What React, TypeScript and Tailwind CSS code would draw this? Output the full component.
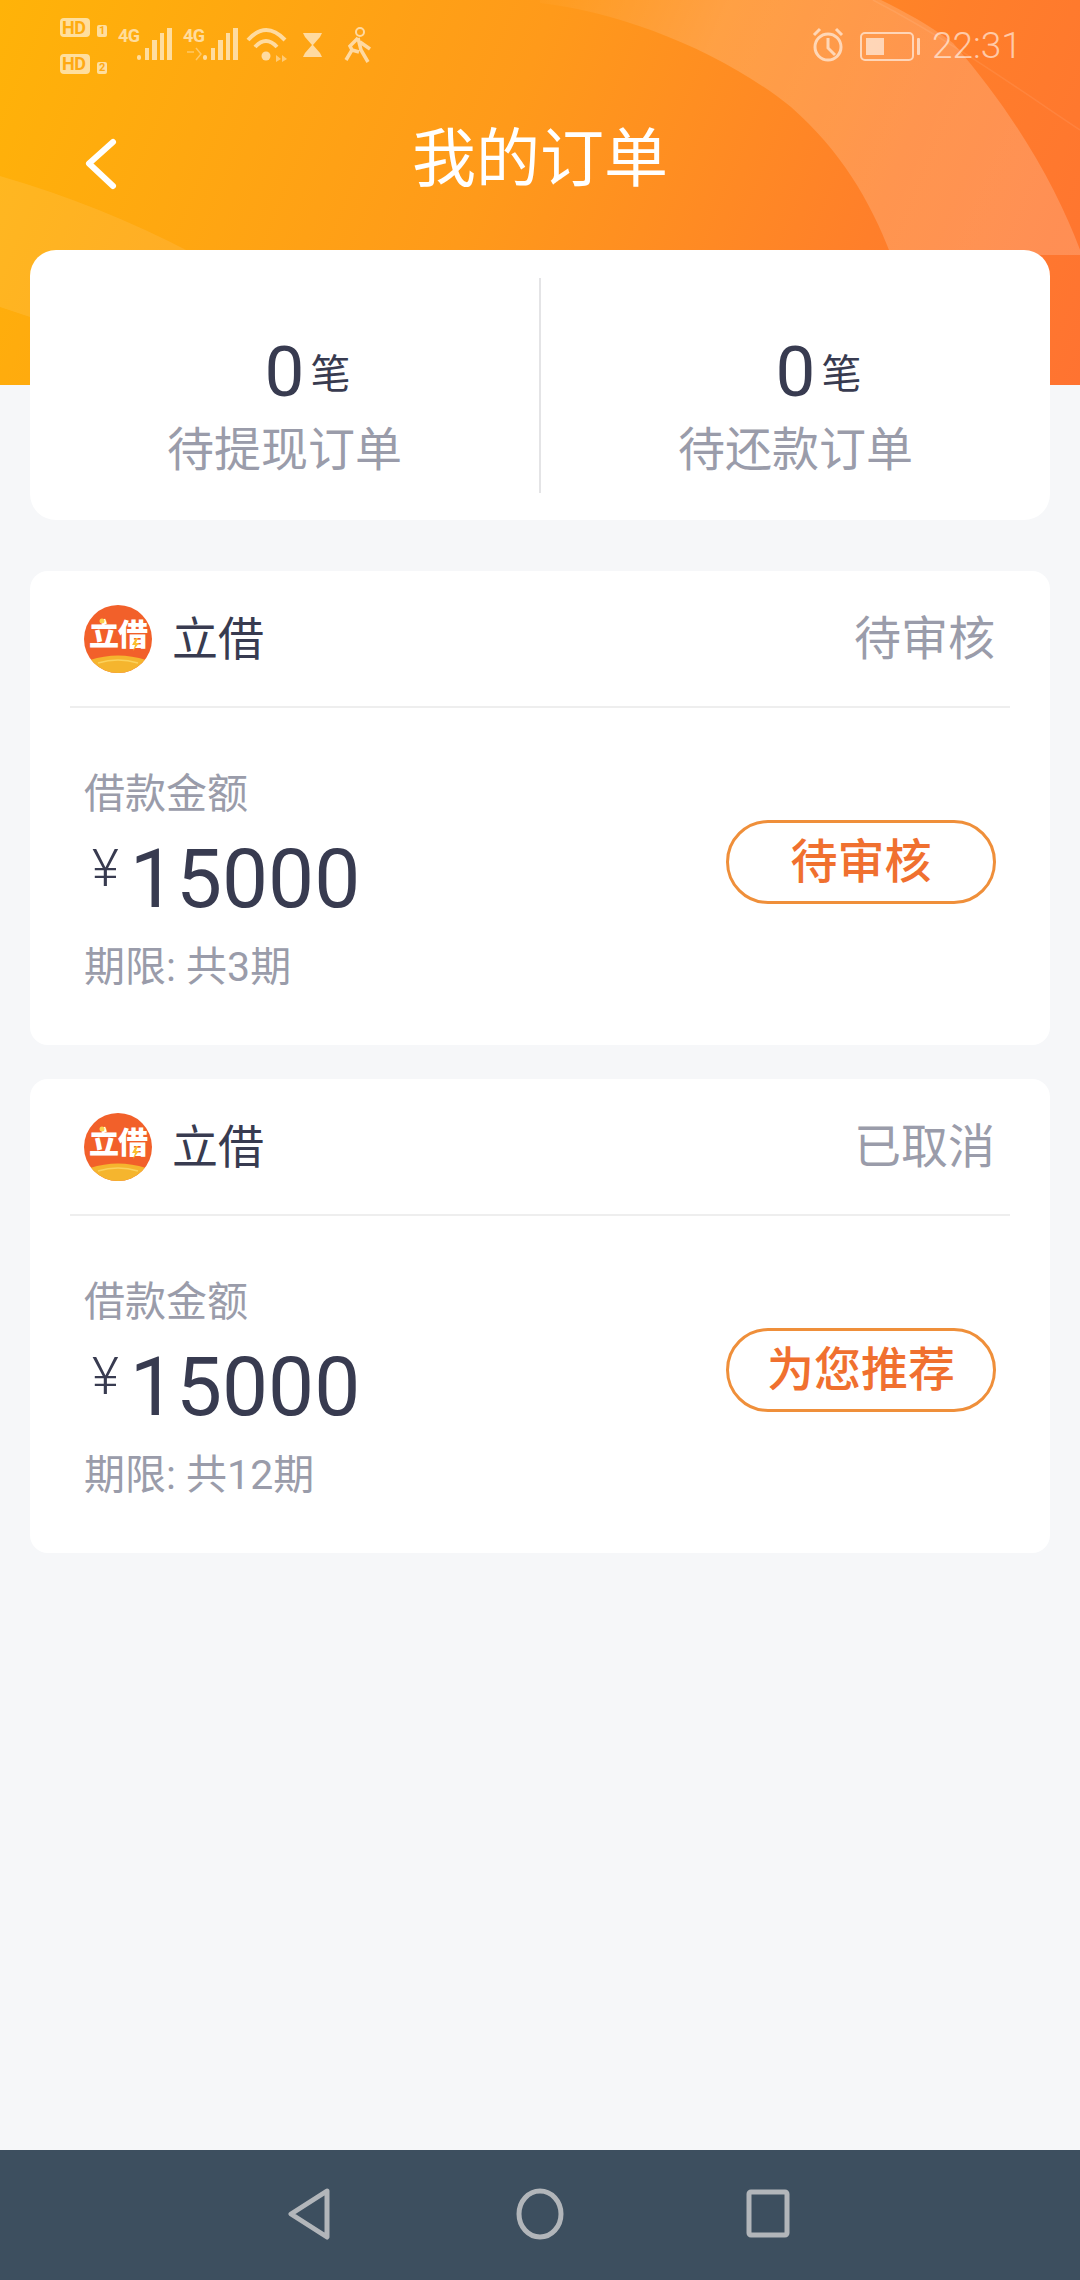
const cjk = "font-['Roboto','Noto_Sans_CJK_SC',sans-serif]";

function Logo() {
  return (
    <div className="relative w-[68px] h-[68px] rounded-full overflow-hidden bg-[#f2602a] flex items-start justify-center">
      <span className="mt-[13px] text-[30px] leading-[34px] font-black text-white tracking-[-1px] whitespace-nowrap">立借</span>
      <svg className="absolute left-0 top-0" width="68" height="68" viewBox="0 0 68 68">
        <path d="M6 55 Q34 46 62 55 L62 68 L6 68 Z" fill="#f5b52e" />
        <path d="M14 58 Q34 52 54 58" stroke="#fbd25c" strokeWidth="1.5" fill="none" />
        <circle cx="18" cy="16" r="2.5" fill="#fcd24f" />
        <path d="M52 33 L48 40 L51 40 L49 46 L55 38 L52 38 L54 33Z" fill="#fbc02d" />
      </svg>
    </div>
  );
}

function OrderCard({ status, action, term }: { status: string; action: string; term: string }) {
  return (
    <div className="bg-white rounded-[18px] h-[474px] mx-[30px] flex flex-col">
      <div className="h-[137px] mx-[40px] pl-[14px] border-b-2 border-[#eeeeee] flex items-center justify-between">
        <div className="flex items-center gap-[20px]">
          <Logo />
          <span className="text-[46px] leading-[60px] text-[#383b50] mt-[1px]">立借</span>
        </div>
        <span className="text-[47px] leading-[60px] text-[#9a9caa] mr-[15px] mt-[1px]">{status}</span>
      </div>
      <div className="flex-1 px-[54px] flex items-start justify-between">
        <div className="pt-[61px] flex flex-col">
          <span className="text-[41px] leading-[50px] text-[#9a9caa]">借款金额</span>
          <div className="flex items-center h-[100px] mt-[10px]">
            <span className="text-[52px] leading-[50px] text-[#383b50] ml-[8px] mt-[-20px] font-light">¥</span>
            <span className="text-[82px] leading-[100px] text-[#383b50] ml-[11px]">15000</span>
          </div>
          <span className="text-[41px] leading-[50px] text-[#9a9caa] mt-[13px]">期限: 共{term}期</span>
        </div>
        <div className="mt-[112px] w-[270px] h-[84px] rounded-full border-[3px] border-[#ef8f3a] flex items-center justify-center text-[47px] font-medium text-[#f0702f]">
          {action}
        </div>
      </div>
    </div>
  );
}

function SignalBars({ x }: { x: number }) {
  return (
    <g fill="#fff">
      <rect x={x} y={55} width="4" height="5" rx="2" />
      <rect x={x + 8} y={48} width="4" height="12" />
      <rect x={x + 15} y={40} width="5" height="20" />
      <rect x={x + 23} y={33} width="4" height="27" />
      <rect x={x + 30} y={28} width="5" height="32" />
    </g>
  );
}

function Stat({ label }: { label: string }) {
  return (
    <div className="flex-1 pt-[82px] flex flex-col items-center">
      <div className="flex items-center h-[80px] ml-[46px]">
        <span className="text-[71px] leading-[80px] text-[#383b50]">0</span>
        <span className="text-[40px] leading-[50px] text-[#383b50] ml-[6px] mt-[6px]">笔</span>
      </div>
      <span className="text-[47px] leading-[60px] text-[#9a9caa] mt-[8px]">{label}</span>
    </div>
  );
}

export default function App() {
  return (
    <div className={`relative w-[1080px] h-[2280px] bg-[#f6f7f9] flex flex-col ${cjk}`}>
      <div className="relative h-[385px] overflow-hidden bg-[linear-gradient(112deg,#ffb308_0%,#ff9a1a_45%,#ff7f2a_78%,#ff7331_100%)] shrink-0">
        <svg className="absolute inset-0" width="1080" height="385" viewBox="0 0 1080 385">
          <defs>
            <linearGradient id="band" x1="540" y1="0" x2="1000" y2="200" gradientUnits="userSpaceOnUse">
              <stop offset="0" stopColor="#ffffff" stopOpacity="0.02" />
              <stop offset="0.35" stopColor="#ffffff" stopOpacity="0.16" />
              <stop offset="1" stopColor="#ffffff" stopOpacity="0.18" />
            </linearGradient>
          </defs>
          <path d="M0 176 Q100 205 190 252 L30 317 L0 307 Z" fill="#ffffff" opacity="0.09" />
          <path d="M540 3 C620 12 720 50 791 107 C840 150 870 200 891 255 L1082 255 C1060 195 1020 120 953 43 C930 25 905 12 881 0 L540 0 Z" fill="url(#band)" />
          <path d="M873 0 C950 40 1020 90 1080 130" stroke="#ffffff" strokeOpacity="0.08" strokeWidth="1.5" fill="none" />
        </svg>

        {/* status bar */}
        <div className="absolute left-0 top-0 w-full h-[76px] text-white">
          <svg className="absolute left-0 top-0" width="400" height="80" viewBox="0 0 400 80" opacity="0.6">
            <rect x="60" y="18" width="30" height="19" rx="4" fill="#fff" />
            <rect x="60" y="54" width="30" height="20" rx="4" fill="#fff" />
            <rect x="97" y="25" width="10" height="12" rx="2" fill="#fff" />
            <rect x="97" y="62" width="10" height="12" rx="2" fill="#fff" />
            <SignalBars x={137} />
            <SignalBars x={203} />
            <path d="M187 52 H194 M196 48 L201 54 L196 60" stroke="#fff" strokeWidth="1.5" fill="none" opacity="0.6" />
            <path d="M248 40 Q266 20 285 40" stroke="#fff" strokeWidth="4" fill="none" />
            <path d="M255 47 Q266 35 277 47" stroke="#fff" strokeWidth="4" fill="none" />
            <circle cx="266" cy="56" r="4.5" fill="#fff" />
            <path d="M276 55 L281 59 L276 62 Z M282 55 L287 59 L282 62 Z" fill="#fff" opacity="0.7" />
            <path d="M303 33 H322 L320 37 L313 45 L320 53 L322 57 H303 L305 53 L312 45 L305 37 Z" fill="#fff" />
            <circle cx="360" cy="32" r="4" stroke="#fff" strokeWidth="2" fill="none" />
            <path d="M358 38 L350 46 L352 50 L346 60 M358 38 L361 50 L368 62 M352 50 L359 52 M360 42 L370 49" stroke="#fff" strokeWidth="3.5" fill="none" />
          </svg>
          <span className="absolute left-[62px] top-[18px] text-[18px] leading-[19px] font-bold text-[#ffac10] tracking-[-0.5px]">HD</span>
          <span className="absolute left-[62px] top-[54px] text-[18px] leading-[20px] font-bold text-[#ffa912] tracking-[-0.5px]">HD</span>
          <span className="absolute left-[99px] top-[25px] text-[11px] leading-[12px] font-bold text-[#ffac10]">1</span>
          <span className="absolute left-[99px] top-[62px] text-[11px] leading-[12px] font-bold text-[#ffa912]">2</span>
          <span className="absolute left-[118px] top-[26px] text-[18px] leading-[20px] font-bold text-white/60 tracking-[-0.5px]">4G</span>
          <span className="absolute left-[183px] top-[26px] text-[18px] leading-[20px] font-bold text-white/60 tracking-[-0.5px]">4G</span>
          <svg className="absolute left-[810px] top-[26px]" width="120" height="40" viewBox="0 0 120 40" fill="none" opacity="0.6">
            <circle cx="18" cy="21" r="13" stroke="#fff" strokeWidth="3" />
            <path d="M18 12 V22 L25 29" stroke="#fff" strokeWidth="3" />
            <path d="M4 9 L10 3 M32 9 L26 3" stroke="#fff" strokeWidth="3" />
            <rect x="51" y="7" width="52" height="27" rx="4" stroke="#fff" strokeWidth="2" />
            <rect x="56" y="12" width="18" height="17" fill="#fff" />
            <rect x="107" y="12" width="3" height="17" rx="1" fill="#fff" />
          </svg>
          <span className="absolute left-[932px] top-[24px] text-[37px] leading-[44px] font-light text-white/60">22:31</span>
        </div>

        <svg className="absolute left-[80px] top-[134px]" width="42" height="60" viewBox="0 0 42 60" fill="none" stroke="#ffffff" strokeWidth="6" strokeLinecap="round" strokeLinejoin="round">
          <path d="M33 8 L9 29.5 L33 52" />
        </svg>
        <div className="absolute left-0 top-[117px] w-full h-[86px] flex items-center justify-center">
          <span className="text-[64px] leading-[86px] text-white">我的订单</span>
        </div>
      </div>

      <div className="relative mx-[30px] mt-[-135px] h-[270px] bg-white rounded-[26px] flex items-start">
        <Stat label="待提现订单" />
        <div className="w-[2px] h-[215px] bg-[#e4e4e6] self-center" />
        <Stat label="待还款订单" />
      </div>

      <div className="mt-[51px] flex flex-col gap-[34px]">
        <OrderCard status="待审核" action="待审核" term="3" />
        <OrderCard status="已取消" action="为您推荐" term="12" />
      </div>

      <div className="mt-auto h-[130px] bg-[#3d4f5f] flex items-center justify-center relative">
        <svg className="absolute left-[287px] top-[38px]" width="50" height="54" viewBox="0 0 50 54" fill="none" stroke="#b2b6ba" strokeWidth="5" strokeLinejoin="round">
          <path d="M40 3 L4 26 L40 49 Z" />
        </svg>
        <svg className="absolute left-[513px] top-[38px]" width="54" height="54" viewBox="0 0 54 54" fill="none" stroke="#b2b6ba" strokeWidth="5">
          <ellipse cx="27" cy="26" rx="21" ry="23" />
        </svg>
        <svg className="absolute left-[745px] top-[38px]" width="48" height="54" viewBox="0 0 48 54" fill="none" stroke="#b2b6ba" strokeWidth="5" strokeLinejoin="round">
          <rect x="4" y="4" width="38" height="43" rx="2" />
        </svg>
      </div>
    </div>
  );
}
